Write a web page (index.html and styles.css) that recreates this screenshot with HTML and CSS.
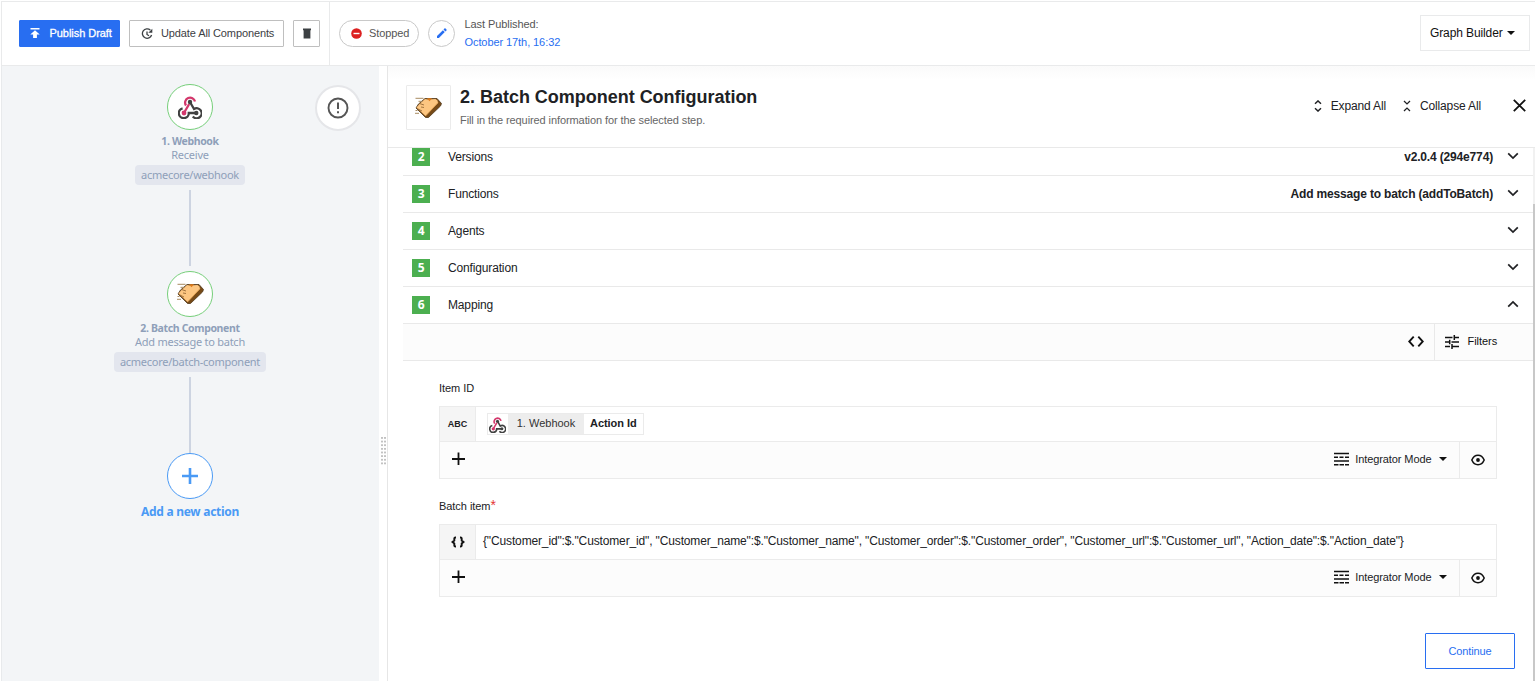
FILE: index.html
```html
<!DOCTYPE html>
<html lang="en">
<head>
<meta charset="utf-8">
<title>Graph Builder</title>
<link rel="stylesheet" href="styles.css">
</head>
<body>
<svg class="defs" width="0" height="0">
  <symbol id="hook" viewBox="0 0 24 23">
    <g fill="none" stroke-width="2.3">
      <path d="M8 9.500A5 5 0 1 1 17 5.600" stroke="#d3386c"/>
      <path d="M11.200 8 6.500 16" stroke="#d3386c"/>
      <path d="M12 6 16 13A5 5 0 1 1 14.800 20.500" stroke="#414141"/>
      <path d="M4.600 12.300A5 5 0 1 0 10.800 17H18" stroke="#414141"/>
    </g>
    <circle cx="12" cy="6" r="2.200" fill="#414141"/>
    <circle cx="6" cy="17" r="2.400" fill="#d3386c"/>
    <circle cx="18.300" cy="17" r="2.200" fill="#414141"/>
  </symbol>
  <symbol id="bread" viewBox="0 0 27 22">
    <path d="M10 1.500H22L26.500 6.500 25.500 9 13.500 20.500H10.500L1 11 3.500 7Z" fill="#774a17" stroke="#51391c" stroke-width=".8"/>
    <path d="M1.500 10.500 4.500 7 10 2 13 2.500 20.500 2 22.500 3.500 23 6 10.500 19Z" fill="#fdc681"/>
    <path d="M23 5.500 10.800 18.800" fill="none" stroke="#e0a050" stroke-width=".8"/>
    <path d="M12 1.300h5l-2.500 3Z" fill="#df7c1b"/>
    <path d="M.5 1.300h8M3.500 4.300h4M0 16.300h4M.5 13.500h2" fill="none" stroke="#a88b61"/>
    <path d="M4.500 6.500l4.500 1.500M6 10l3 .5M3 12l4 2" stroke="#8b602f" stroke-width=".8"/>
  </symbol>
  <symbol id="down" viewBox="0 0 12 8"><path d="M1.2 1.3 6 6.1l4.8-4.8" fill="none" stroke="#202124" stroke-width="1.7"/></symbol>
  <symbol id="caret" viewBox="0 0 8 4"><path d="M0 0h8L4 4Z" fill="#111"/></symbol>
  <symbol id="plus" viewBox="0 0 14 14"><path d="M6.500 .5v12.500M0 7h13" stroke="#111" stroke-width="1.8"/></symbol>
  <symbol id="mode" viewBox="0 0 15 14"><path d="M0 1.500h15M0 9h15" stroke="#111" stroke-width="1.700"/><path d="M0 5.200h4M5.500 5.200h4M11 5.200h4M0 12.700h4.500M5.500 12.700h4.500M11 12.700h4" stroke="#111" stroke-width="1.600"/></symbol>
  <symbol id="eye" viewBox="0 0 14 12"><path d="M.8 6C3.500-.3 10.500-.3 13.200 6 10.500 12.300 3.500 12.300.8 6Z" fill="none" stroke="#111" stroke-width="1.500"/><circle cx="7" cy="6" r="1.900" fill="#111"/></symbol>
</svg>

<header class="topbar">
  <div class="actions">
    <button class="btn primary"><svg width="10" height="11" viewBox="0 0 10 11"><path d="M.5 0h9v1.500h-9zM5 2.200 9.700 6.500H6.900V10H3.100V6.500H.3Z" fill="#fff"/></svg><span>Publish Draft</span></button>
    <button class="btn update"><svg width="12" height="12" viewBox="0 0 12 12"><path d="M9.300 2.100A4.700 4.700 0 1 0 10.600 7M6 3.500V6.500L8 7.700" fill="none" stroke="#3c4043" stroke-width="1.300"/><path d="M11.300.8v4H7.300Z" fill="#3c4043"/></svg><span>Update All Components</span></button>
    <button class="btn trash"><svg width="8" height="11" viewBox="0 0 8 11"><path d="M0 .5h8v1.700h-.6V10.500H.6V2.200H0z" fill="#3c4043"/></svg></button>
  </div>
  <div class="status">
    <span class="pill"><svg width="11" height="11" viewBox="0 0 11 11"><circle cx="5.500" cy="5.500" r="5.300" fill="#dc2020"/><path d="M2.500 5.500h6" stroke="#fff" stroke-width="1.400"/></svg><span>Stopped</span></span>
    <span class="pencil"><svg width="10" height="10" viewBox="0 0 10 10"><path d="M0 8.100 5.900 2.200 7.800 4.100 1.900 10H0zM6.500 1.600 8 .1 9.900 2 8.400 3.500z" fill="#286ef1"/></svg></span>
    <div class="published"><div>Last Published:</div><a>October 17th, 16:32</a></div>
  </div>
  <button class="builder"><span>Graph Builder</span><svg width="8" height="4"><use href="#caret"/></svg></button>
</header>

<main class="workspace">
  <section class="graph">
    <div class="flow">
      <div class="node"><svg width="24" height="23"><use href="#hook"/></svg></div>
      <div class="name">1. Webhook</div>
      <div class="fn">Receive</div>
      <div class="chip c1"><span>acmecore/webhook</span></div>
      <div class="line first"></div>
      <div class="node bread"><svg width="27" height="22"><use href="#bread"/></svg></div>
      <div class="name">2. Batch Component</div>
      <div class="fn">Add message to batch</div>
      <div class="chip c2"><span>acmecore/batch-component</span></div>
      <div class="line second"></div>
      <div class="node add"><svg width="16" height="16" viewBox="0 0 16 16"><path d="M8 0v16M0 8h16" stroke="#4a9af5" stroke-width="2.600"/></svg></div>
      <div class="add-label">Add a new action</div>
    </div>
    <div class="alert"><svg width="22" height="22" viewBox="0 0 22 22"><circle cx="11" cy="11" r="9.500" fill="none" stroke="#555" stroke-width="1.900"/><path d="M11 5.500v6.500M11 14.200v2" stroke="#555" stroke-width="2"/></svg></div>
  </section>
  <div class="divider"><i class="grip"></i></div>
  <section class="panel">
    <div class="panel-head">
      <div class="thumb"><svg width="27" height="22"><use href="#bread"/></svg></div>
      <div class="heading">
        <h1>2. Batch Component Configuration</h1>
        <p>Fill in the required information for the selected step.</p>
      </div>
      <div class="tools">
        <svg width="8" height="12" viewBox="0 0 8 12"><path d="M1 3.800 4 .9l3 2.900M1 8.200l3 2.900 3-2.900" fill="none" stroke="#202124" stroke-width="1.400"/></svg><span>Expand All</span>
        <svg class="collapse" width="8" height="12" viewBox="0 0 8 12"><path d="M1 1l3 2.900L7 1M1 11l3-2.900L7 11" fill="none" stroke="#202124" stroke-width="1.300"/></svg><span>Collapse All</span>
        <svg class="close" width="13" height="13" viewBox="0 0 13 13"><path d="M.8.8l11.400 11.400M12.200.8.8 12.200" stroke="#111" stroke-width="1.800"/></svg>
      </div>
    </div>
    <div class="scroll">
      <div class="rows">
        <div class="row"><b>2</b><span>Versions</span><strong>v2.0.4 (294e774)</strong><svg width="12" height="8"><use href="#down"/></svg></div>
        <div class="row"><b>3</b><span>Functions</span><strong>Add message to batch (addToBatch)</strong><svg width="12" height="8"><use href="#down"/></svg></div>
        <div class="row"><b>4</b><span>Agents</span><svg width="12" height="8"><use href="#down"/></svg></div>
        <div class="row"><b>5</b><span>Configuration</span><svg width="12" height="8"><use href="#down"/></svg></div>
        <div class="row"><b>6</b><span>Mapping</span><svg class="up" width="12" height="8"><use href="#down"/></svg></div>
        <div class="mapbar">
          <svg class="code" width="16" height="11" viewBox="0 0 16 11"><path d="M5.700.7 1.200 5.500l4.500 4.800M10.300.7l4.500 4.800-4.500 4.800" fill="none" stroke="#111" stroke-width="1.900"/></svg>
          <div class="filters"><svg width="14" height="14" viewBox="0 0 14 14"><path d="M0 2.500h7.500M9 2.500h5M9.300 0v5M0 7h4M6.500 7h7.500M4.700 4.700v4.600M0 11.500h5M7 11.500h7M7 9v5" stroke="#111" stroke-width="1.500"/></svg><span>Filters</span></div>
        </div>
      </div>
      <div class="fields">
        <div class="label">Item ID</div>
        <div class="box">
          <div class="value"><div class="type">ABC</div>
            <div class="token"><svg width="17" height="16"><use href="#hook"/></svg><span class="src">1. Webhook</span><span class="prop">Action Id</span></div>
          </div>
          <div class="foot"><svg class="plus" width="14" height="14"><use href="#plus"/></svg><div class="mode"><svg width="15" height="14"><use href="#mode"/></svg><span>Integrator Mode</span><svg width="8" height="4"><use href="#caret"/></svg></div><div class="view"><svg width="14" height="12"><use href="#eye"/></svg></div></div>
        </div>
        <div class="label batch">Batch item<em>*</em></div>
        <div class="box">
          <div class="value"><div class="type"><svg width="14" height="12" viewBox="0 0 14 12"><path d="M5 1.500H4.500Q3.300 1.500 3.300 2.500V4.500L1.500 6 3.300 7.500V9.500q0 1 1.200 1H5M9 1.500h.5q1.200 0 1.200 1V4.500L12.500 6 10.700 7.500V9.500q0 1-1.200 1H9" fill="none" stroke="#111" stroke-width="1.900"/></svg></div>
            <span class="expr">{"Customer_id":$."Customer_id", "Customer_name":$."Customer_name", "Customer_order":$."Customer_order", "Customer_url":$."Customer_url", "Action_date":$."Action_date"}</span>
          </div>
          <div class="foot"><svg class="plus" width="14" height="14"><use href="#plus"/></svg><div class="mode"><svg width="15" height="14"><use href="#mode"/></svg><span>Integrator Mode</span><svg width="8" height="4"><use href="#caret"/></svg></div><div class="view"><svg width="14" height="12"><use href="#eye"/></svg></div></div>
        </div>
      </div>
      <button class="continue">Continue</button>
      <div class="scrollbar"></div>
    </div>
  </section>
</main>
</body>
</html>
```

FILE: styles.css
```css
* { box-sizing: border-box; }
body { margin: 0; width: 1535px; height: 681px; overflow: hidden; display: flex; flex-direction: column; background: #fff; color: #202124; font: 12px/14px "Liberation Sans", Arial, sans-serif; }
svg { display: block; flex: none; }
.defs { position: absolute; }
button { font: inherit; padding: 0; background: #fff; border-radius: 0; }
span, h1, p, strong, a { white-space: nowrap; }
.topbar { display: flex; height: 65px; flex: none; margin: 1px 0 0 1px; border: solid #e9eaeb; border-width: 1px 0 1px 1px; }
.actions { width: 328px; display: flex; align-items: center; gap: 9px; padding-left: 17px; border-right: 1px solid #e9eaeb; }
.btn { height: 27px; display: flex; align-items: center; border: 1px solid #bfbfbf; border-radius: 1px; font-size: 11px; color: #3c4043; }
.btn span, .pill span { margin-bottom: 2px; }
.primary { width: 101px; background: #286ef1; border-color: #286ef1; color: #fff; padding-left: 10px; gap: 9.5px; letter-spacing: -.05px; -webkit-text-stroke: .3px #fff; }
.update { width: 155px; padding-left: 11px; gap: 8px; letter-spacing: -.11px; }
.trash { width: 27px; justify-content: center; }
.status { display: flex; align-items: center; padding-left: 9px; color: #555; font-size: 11px; }
.pill { width: 80px; height: 27px; border: 1px solid #c9c9c9; border-radius: 14px; display: flex; align-items: center; padding-left: 11px; gap: 7px; letter-spacing: -.1px; }
.pencil { width: 27px; height: 27px; border: 1px solid #c9c9c9; border-radius: 50%; margin-left: 9px; display: grid; place-items: center; padding-bottom: 1px; }
.published { margin: 0 0 2px 9.500px; line-height: 18px; letter-spacing: -.08px; }
.published a { color: #286ef1; }
.builder { width: 110px; height: 36px; margin: 13px 5px 0 auto; border: 1px solid #e9eaeb; display: flex; align-items: center; padding-left: 9px; gap: 4px; color: #111; letter-spacing: -.11px; }
.workspace { flex: 1; min-height: 0; display: flex; }
.graph { width: 378px; margin-left: 1px; background: #f3f5f7; border-left: 1px solid #e8eaec; position: relative; font-family: "Noto Sans", sans-serif; color: #8e9fb9; font-size: 11px; }
.flow { width: 376px; padding-top: 18px; display: flex; flex-direction: column; align-items: center; }
.node { width: 46px; height: 46px; border: 1px solid #76cf7a; border-radius: 50%; background: #fff; display: grid; place-items: center; flex: none; }
.name { margin-top: 4px; height: 14px; font-size: 10.500px; font-weight: 700; white-space: nowrap; letter-spacing: -.35px; }
.fn { height: 14px; white-space: nowrap; letter-spacing: -.25px; }
.chip { height: 20px; margin-top: 3px; border-radius: 4px; background: #e3e6ee; line-height: 19px; text-align: center; letter-spacing: -.26px; }
.c1 { width: 110px; }
.c2 { width: 152px; }
.line { width: 2px; background: #cdd4e1; margin-top: 5px; }
.first { height: 76px; margin-bottom: 5px; }
.second { height: 76px; }
.add { border-color: #4a9af5; }
.add-label { margin-top: 6px; color: #4a9af5; font-size: 12px; font-weight: 700; white-space: nowrap; letter-spacing: -.27px; }
.alert { position: absolute; left: 313px; top: 19px; width: 46px; height: 46px; border: 2px solid #e5e6e9; border-radius: 50%; background: #fff; display: grid; place-items: center; }
.divider { width: 8px; display: flex; align-items: center; padding: 154px 0 0 2px; }
.grip { width: 5px; height: 28px; background: radial-gradient(circle at 1px 1px, #c2c2c2 1px, transparent 1.2px) 0 0 / 3px 3.65px; }
.panel { flex: 1; min-width: 0; border-left: 1px solid #e6e6e6; display: flex; flex-direction: column; }
.panel-head { height: 82px; flex: none; border-bottom: 1px solid #e9e9e9; display: flex; padding-left: 18px; background: linear-gradient(#fafafa, #fff 14px); }
.thumb { width: 45px; height: 45px; margin-top: 19px; border: 1px solid #ebebeb; border-radius: 1px; background: #fff; display: grid; place-items: center; }
.heading { margin: 21px 0 0 9px; }
h1 { margin: 0; font-size: 18px; line-height: 20px; font-weight: 700; letter-spacing: -.02px; }
p { margin: 6px 0 0; font-size: 11px; color: #666; letter-spacing: -.09px; }
.tools { margin-left: auto; height: 79px; display: flex; align-items: center; padding-right: 9px; letter-spacing: -.14px; }
.tools span { margin-left: 9px; }
.tools .collapse { margin-left: 17px; }
.tools .close { margin-left: 32px; }
.scroll { flex: 1; min-height: 0; overflow: hidden; position: relative; }
.rows { margin: -9px 2px 0 15px; letter-spacing: -.15px; }
.row { height: 37px; border-bottom: 1px solid #e9e9e9; display: flex; align-items: center; padding: 0 14px 0 9px; }
.row b { width: 18px; height: 18px; margin-right: 18px; background: #4caf50; color: #fff; text-align: center; font: 700 12px/18px "Open Sans", sans-serif; }
.row strong { margin-left: auto; letter-spacing: -.16px; }
.row svg { margin: 0 0 2px auto; }
.row strong + svg { margin-left: 14px; }
.up { transform: rotate(180deg); }
.mapbar { height: 37px; background: #fcfcfc; border-bottom: 1px solid #e9e9e9; display: flex; align-items: center; justify-content: flex-end; }
.code { margin-bottom: 2px; }
.filters { align-self: stretch; width: 99px; margin-left: 10px; border-left: 1px solid #e9e9e9; display: flex; align-items: center; padding-left: 9.500px; gap: 9px; font-size: 11px; color: #111; letter-spacing: -.05px; }
.filters span { margin-bottom: 2px; }
.fields { padding: 20px 38px 0 51px; font-size: 11px; }
.label { height: 25px; letter-spacing: -.05px; }
.label em { color: #e43434; font-style: normal; font-size: 14px; line-height: 10px; }
.batch { margin-top: 20px; }
.box { height: 73px; border: 1px solid #ebebeb; }
.value { display: flex; height: 35px; border-bottom: 1px solid #ebebeb; align-items: center; }
.type { width: 36px; height: 34px; display: grid; place-items: center; border-right: 1px solid #ebebeb; background: #f5f5f5; font-size: 9px; font-weight: 700; }
.token { width: 157px; height: 22px; margin-left: 11px; display: flex; align-items: center; border: 1px solid #ebebeb; }
.token svg { margin: 2px 2px 0 1px; }
.src { width: 76px; height: 20px; line-height: 18px; background: #ededed; color: #333; text-align: center; }
.prop { height: 20px; line-height: 18px; padding-left: 6px; font-weight: 700; letter-spacing: -.05px; }
.expr { margin: 0 0 2px 7px; font-size: 12px; letter-spacing: -.141px; }
.foot { height: 36px; background: #fcfcfc; display: flex; align-items: center; padding-left: 12px; }
.plus { margin-bottom: 2px; }
.mode { margin: 0 0 2px auto; display: flex; align-items: center; gap: 6px; padding-right: 12px; letter-spacing: -.09px; }
.mode span { margin-right: 1.500px; }
.view { width: 37px; height: 36px; border-left: 1px solid #ebebeb; display: grid; place-items: center; }
.continue { display: block; width: 90px; height: 36px; margin: 36px 20px 0 auto; border: 1px solid #286ef1; border-radius: 1px; color: #286ef1; font-size: 11px; letter-spacing: -.1px; }
.scrollbar { position: absolute; right: 0; top: 0; bottom: 0; width: 2px; background: linear-gradient(#f1f1f1 56px, #c8c8c8 56px); }
```
